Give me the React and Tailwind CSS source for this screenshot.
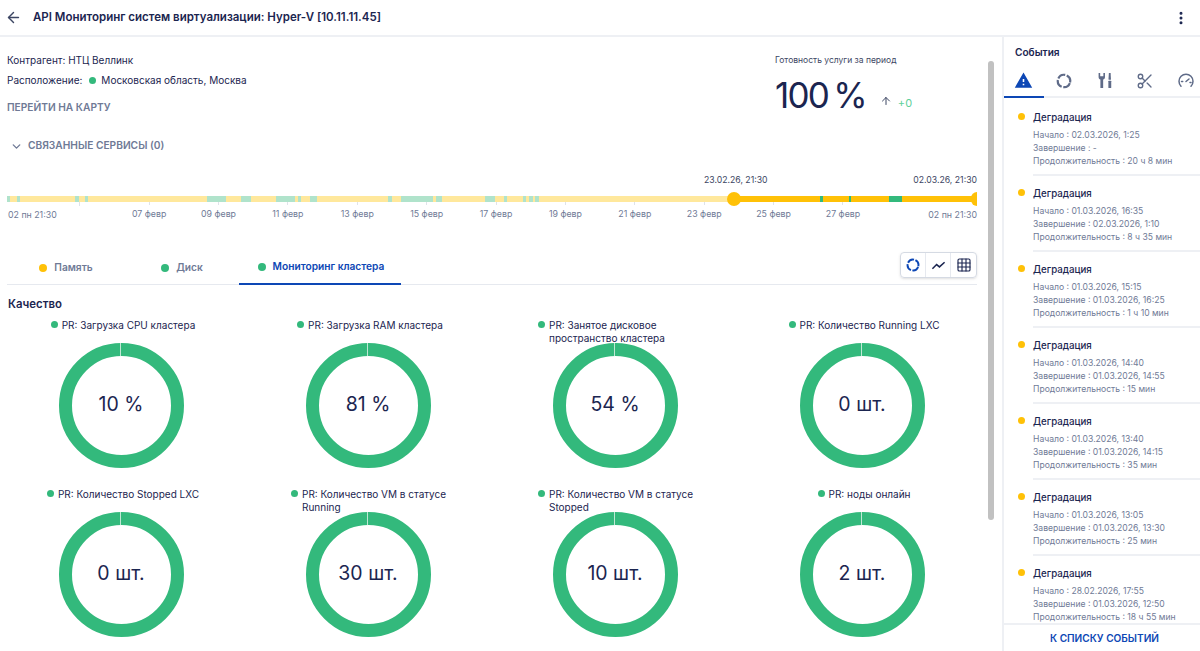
import React from 'react';
import { ArrowLeft, ArrowUp, ChevronDown, EllipsisVertical, Grid3x3, Scissors } from 'lucide-react';
import { MdWarning } from 'react-icons/md';

const GREEN = '#33b97c';

// границы зелёных участков таймлайна, в пикселях от начала полосы
const lightSpans = [[0, 3], [10, 13], [68, 72], [78, 81], [200, 219], [234, 244], [269, 288], [291, 294], [303, 310], [381, 385], [394, 426], [429, 435], [478, 488], [497, 500], [516, 519], [522, 526], [528, 532]];
const darkSpans = [[813, 816], [842, 844], [882, 895]];

function buildSegments() {
    const segments = [];
    let pos = 0;
    const push = (to, color) => {
        if (to > pos) segments.push({ width: to - pos, color });
        pos = to;
    };
    lightSpans.forEach(([from, to]) => {
        push(from, '#ffe89c');
        push(to, '#b0e3cb');
    });
    push(727, '#ffe89c');
    darkSpans.forEach(([from, to]) => {
        push(from, '#ffc107');
        push(to, GREEN);
    });
    push(970, '#ffc107');
    return segments;
}

const axisLabels = ['', '07 февр', '09 февр', '11 февр', '13 февр', '15 февр', '17 февр', '19 февр', '21 февр', '23 февр', '25 февр', '27 февр'];

const charts = [
    { title: 'PR: Загрузка CPU кластера', value: '10 %', titleClass: 'pl-[4px]' },
    { title: 'PR: Загрузка RAM кластера', value: '81 %', titleClass: 'pl-[4px]' },
    { title: 'PR: Занятое дисковое пространство кластера', value: '54 %', titleClass: 'pl-[3px]', textClass: 'w-[146px]' },
    { title: 'PR: Количество Running LXC', value: '0 шт.', titleClass: 'pl-[4px]' },
    { title: 'PR: Количество Stopped LXC', value: '0 шт.', titleClass: 'pl-[4px]' },
    { title: 'PR: Количество VM в статусе Running', value: '30 шт.', titleClass: 'pl-[3px]', textClass: 'w-[146px]' },
    { title: 'PR: Количество VM в статусе Stopped', value: '10 шт.', titleClass: 'pl-[3px]', textClass: 'w-[146px]' },
    { title: 'PR: ноды онлайн', value: '2 шт.', titleClass: 'pl-[4px]' },
];

const events = [
    { start: '02.03.2026, 1:25', end: '-', duration: '20 ч 8 мин' },
    { start: '01.03.2026, 16:35', end: '02.03.2026, 1:10', duration: '8 ч 35 мин' },
    { start: '01.03.2026, 15:15', end: '01.03.2026, 16:25', duration: '1 ч 10 мин' },
    { start: '01.03.2026, 14:40', end: '01.03.2026, 14:55', duration: '15 мин' },
    { start: '01.03.2026, 13:40', end: '01.03.2026, 14:15', duration: '35 мин' },
    { start: '01.03.2026, 13:05', end: '01.03.2026, 13:30', duration: '25 мин' },
    { start: '28.02.2026, 17:55', end: '01.03.2026, 12:50', duration: '18 ч 55 мин' },
];

function RingIcon({ className }) {
    return (
        <svg viewBox="0 0 16 16" fill="none" className={className}>
            <circle cx="8" cy="8" r="6.2" stroke="currentColor" strokeWidth="2.2" strokeDasharray="8 1.74" transform="rotate(20 8 8)" />
        </svg>
    );
}

function ToolsIcon({ className }) {
    return (
        <svg viewBox="0 0 16 16" fill="currentColor" className={className}>
            <path d="M1.5 1v3.6c0 1.2.7 2.1 1.7 2.5V15h2.6V7.1c1-.4 1.7-1.3 1.7-2.5V1L6 .9V4H3V.9z" />
            <path d="M11.2 1h1.6l.3 4.8v1.4h-2.2V5.800z" />
            <rect x="10.700" y="8.200" width="2.700" height="6.800" rx=".5" />
        </svg>
    );
}

function GaugeIcon({ className }) {
    return (
        <svg viewBox="0 0 16 16" fill="none" stroke="currentColor" strokeWidth="1.500" strokeLinecap="round" className={className}>
            <path d="M3 13.200A7 7 0 1 1 13 13.200" />
            <path d="M8 8.500 11 6" />
            <path d="M3.500 8.500h1.200M12 9.500h1" />
        </svg>
    );
}

function LineIcon({ className }) {
    return (
        <svg viewBox="0 0 16 16" fill="none" stroke="currentColor" strokeWidth="1.600" className={className}>
            <path d="M1.500 11.500 6 7l3 2.500 5.500-5" />
        </svg>
    );
}

function Dot({ color = GREEN, className = 'w-[7px] h-[7px]' }) {
    return <span className={`${className} rounded-full shrink-0`} style={{ backgroundColor: color }} />;
}

function Timeline() {
    return (
        <div className="mt-[19px]">
            <div className="flex h-[16px] items-center text-[8.700px] text-[#3c4663] whitespace-nowrap">
                <span className="ml-[697px]">23.02.26, 21:30</span>
                <span className="ml-auto">02.03.26, 21:30</span>
            </div>
            <div className="relative mt-[7px] h-[6px] flex">
                {buildSegments().map((seg, i) => (
                    <div key={i} className="h-full" style={{ width: seg.width, backgroundColor: seg.color }} />
                ))}
                <div className="absolute left-[720px] top-[-4px] w-[14px] h-[14px] rounded-full bg-[#ffc107]" />
                <div className="absolute right-0 top-[-4px] w-[6px] h-[14px] rounded-l-full bg-[#ffc107]" />
            </div>
            <div className="flex h-[19px] text-[8.800px] text-[#6f7a96] whitespace-nowrap">
                <div className="w-[38px] pt-[6px] leading-[14px]">
                    <span className="ml-[1px]">02 пн 21:30</span>
                </div>
                {axisLabels.map((label, i) => (
                    <div key={i} className="w-[69.4px] flex flex-col items-center">
                        <div className="w-px h-[4px] bg-[#dfe3ea]" />
                        <span className="leading-[14px] mt-[2px]">{label}</span>
                    </div>
                ))}
                <div className="ml-auto pt-[6px] leading-[14px]">02 пн 21:30</div>
            </div>
        </div>
    );
}

function Tabs() {
    return (
        <div className="mt-[31px] h-[33px] flex border-b border-[#e6e9ef]">
            <div className="w-[116px] h-[32px] pl-[2px] flex items-center justify-center gap-[7px] text-[10.200px] font-semibold text-[#6f7a96]">
                <Dot color="#ffc107" className="w-[8px] h-[8px]" />
                Память
            </div>
            <div className="w-[116px] h-[32px] pl-[2px] flex items-center justify-center gap-[7px] text-[10.200px] font-semibold text-[#6f7a96]">
                <Dot className="w-[8px] h-[8px]" />
                Диск
            </div>
            <div className="w-[162px] h-[33px] pb-[1px] pl-[2px] flex items-center justify-center gap-[7px] text-[10.200px] font-semibold text-[#0d47b5] border-b-[2px] border-[#0d47b5]">
                <Dot className="w-[8px] h-[8px]" />
                Мониторинг кластера
            </div>
            <div className="ml-auto h-[26px] flex rounded border border-[#d5dae3] shadow-sm">
                <div className="w-[25px] flex items-center justify-center border-r border-[#e6e9ef] text-[#0d47b5]">
                    <RingIcon className="w-[14px] h-[14px]" />
                </div>
                <div className="w-[25px] flex items-center justify-center border-r border-[#e6e9ef] text-[#1b2550]">
                    <LineIcon className="w-[15px] h-[15px]" />
                </div>
                <div className="w-[25px] flex items-center justify-center text-[#1b2550]">
                    <Grid3x3 className="w-[16px] h-[16px]" strokeWidth={1.700} />
                </div>
            </div>
        </div>
    );
}

function Donut({ title, value, titleClass, textClass }) {
    return (
        <div className="flex flex-col items-center">
            <div className={`h-[25px] pt-[1px] w-full flex justify-center text-[10px] leading-[13px] text-[#1b2550] ${titleClass}`}>
                <div className="flex items-start gap-[4px]">
                    <Dot className="w-[7px] h-[7px] mt-[2px]" />
                    <span className={textClass}>{title}</span>
                </div>
            </div>
            <div className="relative w-[125px] h-[125px] pb-[2px] rounded-full border-[13px] border-[#33b97c] flex items-center justify-center text-[19.500px] text-[#1b2550]">
                <div className="absolute top-[-13px] left-[48.500px] w-px h-[13px] bg-[#bfe8d4]" />
                {value}
            </div>
        </div>
    );
}

function EventsPanel() {
    return (
        <aside className="w-[198px] shrink-0 border-l-[2px] border-[#eef0f4] flex flex-col h-full">
            <div className="pl-[11px] pt-[8px] h-[28px] text-[10.100px] leading-[14px] font-semibold text-[#1b2550]">События</div>
            <div className="h-[33px] flex border-b-[2px] border-[#eef0f4] text-[#5f6b88]">
                <div className="w-[40px] h-[33px] flex items-center justify-center pb-[1px] border-b-[2px] border-[#0d47b5] text-[#0d47b5]">
                    <MdWarning className="w-[19px] h-[19px]" />
                </div>
                <div className="w-[41px] flex items-center justify-center"><RingIcon className="w-[16px] h-[16px]" /></div>
                <div className="w-[41px] pl-[2px] flex items-center justify-center"><ToolsIcon className="w-[17px] h-[17px]" /></div>
                <div className="w-[40px] flex items-center justify-center"><Scissors className="w-[18px] h-[18px]" strokeWidth={1.800} /></div>
                <div className="w-[36px] pl-[7px] flex items-center justify-center"><GaugeIcon className="w-[16px] h-[16px]" /></div>
            </div>
            <div className="flex-1 overflow-hidden pt-[2px]">
                {events.map((ev, i) => (
                    <div key={i} className="flex h-[76px] pl-[14px]">
                        <Dot color="#ffc107" className="w-[7px] h-[7px] mt-[13px]" />
                        <div className="ml-[8px] flex-1 pt-[11px] border-b-[2px] border-[#eef0f4]">
                            <div className="text-[9.700px] leading-[14px] font-medium text-[#1b2550]">Деградация</div>
                            <div className="mt-[4px] text-[8.600px] leading-[13px] text-[#6f7a96]">
                                <div>Начало : {ev.start}</div>
                                <div>Завершение : {ev.end}</div>
                                <div>Продолжительность : {ev.duration}</div>
                            </div>
                        </div>
                    </div>
                ))}
            </div>
            <div className="h-[28px] pt-[1px] pl-[5px] border-t-[2px] border-[#eef0f4] flex items-center justify-center text-[10.100px] font-semibold text-[#0d47b5]">
                К СПИСКУ СОБЫТИЙ
            </div>
        </aside>
    );
}

export default function App() {
    return (
        <div className="w-[1200px] h-[651px] bg-white overflow-hidden flex flex-col font-['Inter',sans-serif]">
            <header className="h-[37px] shrink-0 flex items-center border-b-[2px] border-[#eef0f4] pl-[5px] pr-[11px]">
                <ArrowLeft className="w-[17px] h-[17px] text-[#3c4663]" strokeWidth={2} />
                <h1 className="ml-[11px] text-[11.500px] font-semibold text-[#1b2550]">API Мониторинг систем виртуализации: Hyper-V [10.11.11.45]</h1>
                <EllipsisVertical className="ml-auto w-[16px] h-[16px] text-[#1b2550]" strokeWidth={2.500} />
            </header>
            <div className="flex-1 min-h-0 flex">
                <main className="relative w-[1002px] shrink-0 overflow-hidden pl-[7px] pr-[25px]">
                    <div className="absolute left-[988px] top-[24px] w-[6px] h-[459px] rounded bg-[#c1c1c1]" />
                    <div className="flex">
                        <div className="flex-1 pt-[15px]">
                            <div className="h-[16px] text-[10px] leading-[16px] text-[#1b2550]">Контрагент: НТЦ Веллинк</div>
                            <div className="mt-[4px] h-[16px] flex items-center text-[10px] text-[#1b2550]">
                                Расположение:
                                <Dot className="w-[7px] h-[7px] ml-[7px] mr-[5px]" />
                                Московская область, Москва
                            </div>
                            <div className="mt-[11px] h-[16px] text-[10.200px] leading-[16px] font-semibold text-[#6f7a96]">ПЕРЕЙТИ НА КАРТУ</div>
                            <div className="mt-[23px] h-[16px] flex items-center text-[10.200px] font-semibold text-[#6f7a96]">
                                <ChevronDown className="w-[13px] h-[13px] ml-[3px] mr-[5px]" strokeWidth={2.500} />
                                СВЯЗАННЫЕ СЕРВИСЫ (0)
                            </div>
                        </div>
                        <div className="w-[202px] pt-[15px]">
                            <div className="h-[16px] text-[8.500px] leading-[16px] text-[#3c4663]">Готовность услуги за период</div>
                            <div className="flex items-end mt-[5px]">
                                <span className="text-[35px] leading-[44px] tracking-[-0.05em] [word-spacing:-3px] text-[#1b2550]">100 %</span>
                                <ArrowUp className="w-[12px] h-[12px] ml-[14px] mb-[10px] text-[#3c4663]" strokeWidth={2} />
                                <span className="ml-[6px] mb-[7px] text-[11px] leading-[14px] text-[#5fd09a]">+0</span>
                            </div>
                        </div>
                    </div>
                    <Timeline />
                    <Tabs />
                    <div className="mt-[12px] h-[14px] ml-[1px] text-[11.400px] leading-[14px] font-semibold text-[#1b2550]">Качество</div>
                    <div className="mt-[7px] ml-[-9.500px] w-[988px] grid grid-cols-4 gap-y-[19px]">
                        {charts.map((chart) => (
                            <Donut key={chart.title} {...chart} />
                        ))}
                    </div>
                </main>
                <EventsPanel />
            </div>
        </div>
    );
}
